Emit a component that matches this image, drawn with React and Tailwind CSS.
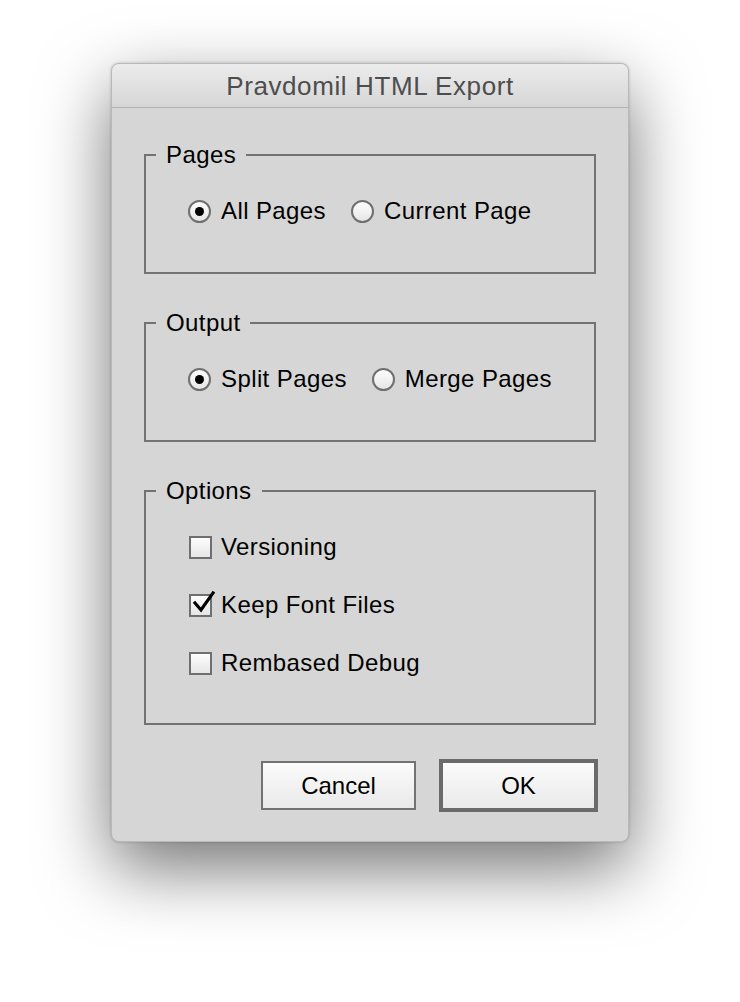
import React from 'react';

const font = { fontFamily: '"Liberation Sans", Arial, sans-serif' };

const Radio = ({ checked, label }) => (
  <label className="flex items-center h-[28px]">
    <span className="w-[23px] h-[23px] rounded-full border-2 border-[#6f6f6f] bg-gradient-to-b from-[#fdfdfd] to-[#e6e6e6] flex items-center justify-center">
      {checked && <span className="w-[9px] h-[9px] rounded-full bg-black" />}
    </span>
    <span className="ml-[10px] text-[24px] leading-[28px] tracking-[0.4px] text-black">{label}</span>
  </label>
);

const Check = ({ checked, label }) => (
  <label className="flex items-center h-[28px]">
    <span className="relative w-[23px] h-[23px] border-2 border-[#6f6f6f] bg-gradient-to-b from-[#fdfdfd] to-[#e6e6e6]">
      {checked && (
        <svg className="absolute left-[1px] top-[-5px]" width="24" height="24" viewBox="0 0 24 24">
          <path d="M3 12 L9 19 L21 2" fill="none" stroke="#000" strokeWidth="3.2" strokeLinecap="square" strokeLinejoin="miter" />
        </svg>
      )}
    </span>
    <span className="ml-[9px] text-[24px] leading-[28px] tracking-[0.4px] text-black">{label}</span>
  </label>
);

const Group = ({ title, height, children }) => (
  <fieldset className="border-2 border-[#737373] w-[452px]" style={{ height }}>
    <legend className="ml-[10px] px-[10px] text-[24px] leading-[28px] tracking-[0.4px] text-black">{title}</legend>
    {children}
  </fieldset>
);

export default function App() {
  return (
    <div className="w-[740px] h-[1002px] bg-white flex justify-center pt-[63px]" style={font}>
      <div className="w-[518px] h-[779px] rounded-[8px] border border-[#b9b9b9] bg-[#d6d6d6] overflow-hidden shadow-[0_26px_70px_rgba(0,0,0,0.55),0_0_3px_rgba(0,0,0,0.2)] flex flex-col">
        <div className="h-[44px] shrink-0 bg-gradient-to-b from-[#ececec] to-[#d6d6d6] border-b border-[#b3b3b3] flex items-center justify-center">
          <span className="text-[26px] leading-[30px] text-[#4d4d4d] tracking-[0.6px] pt-[1px]">Pravdomil HTML Export</span>
        </div>
        <div className="pl-[32px] pt-[33px] flex flex-col">
          <Group title="Pages" height="133px">
            <div className="pt-[28px] pl-[42px] flex gap-[25px]">
              <Radio checked label="All Pages" />
              <Radio label="Current Page" />
            </div>
          </Group>
          <div className="h-[35px]" />
          <Group title="Output" height="133px">
            <div className="pt-[28px] pl-[42px] flex gap-[25px]">
              <Radio checked label="Split Pages" />
              <Radio label="Merge Pages" />
            </div>
          </Group>
          <div className="h-[35px]" />
          <Group title="Options" height="248px">
            <div className="pt-[28px] pl-[43px] flex flex-col gap-[30px]">
              <Check label="Versioning" />
              <Check checked label="Keep Font Files" />
              <Check label="Rembased Debug" />
            </div>
          </Group>
          <div className="flex items-center mt-[34px] pl-[117px] gap-[23px]">
            <button className="w-[155px] h-[49px] border-2 border-[#727272] bg-gradient-to-b from-[#fbfbfb] to-[#e9e9e9] text-[24px] text-black">Cancel</button>
            <button className="w-[159px] h-[53px] border-[4px] border-[#6a6a6a] bg-gradient-to-b from-[#fbfbfb] to-[#e9e9e9] text-[24px] text-black">OK</button>
          </div>
        </div>
      </div>
    </div>
  );
}
